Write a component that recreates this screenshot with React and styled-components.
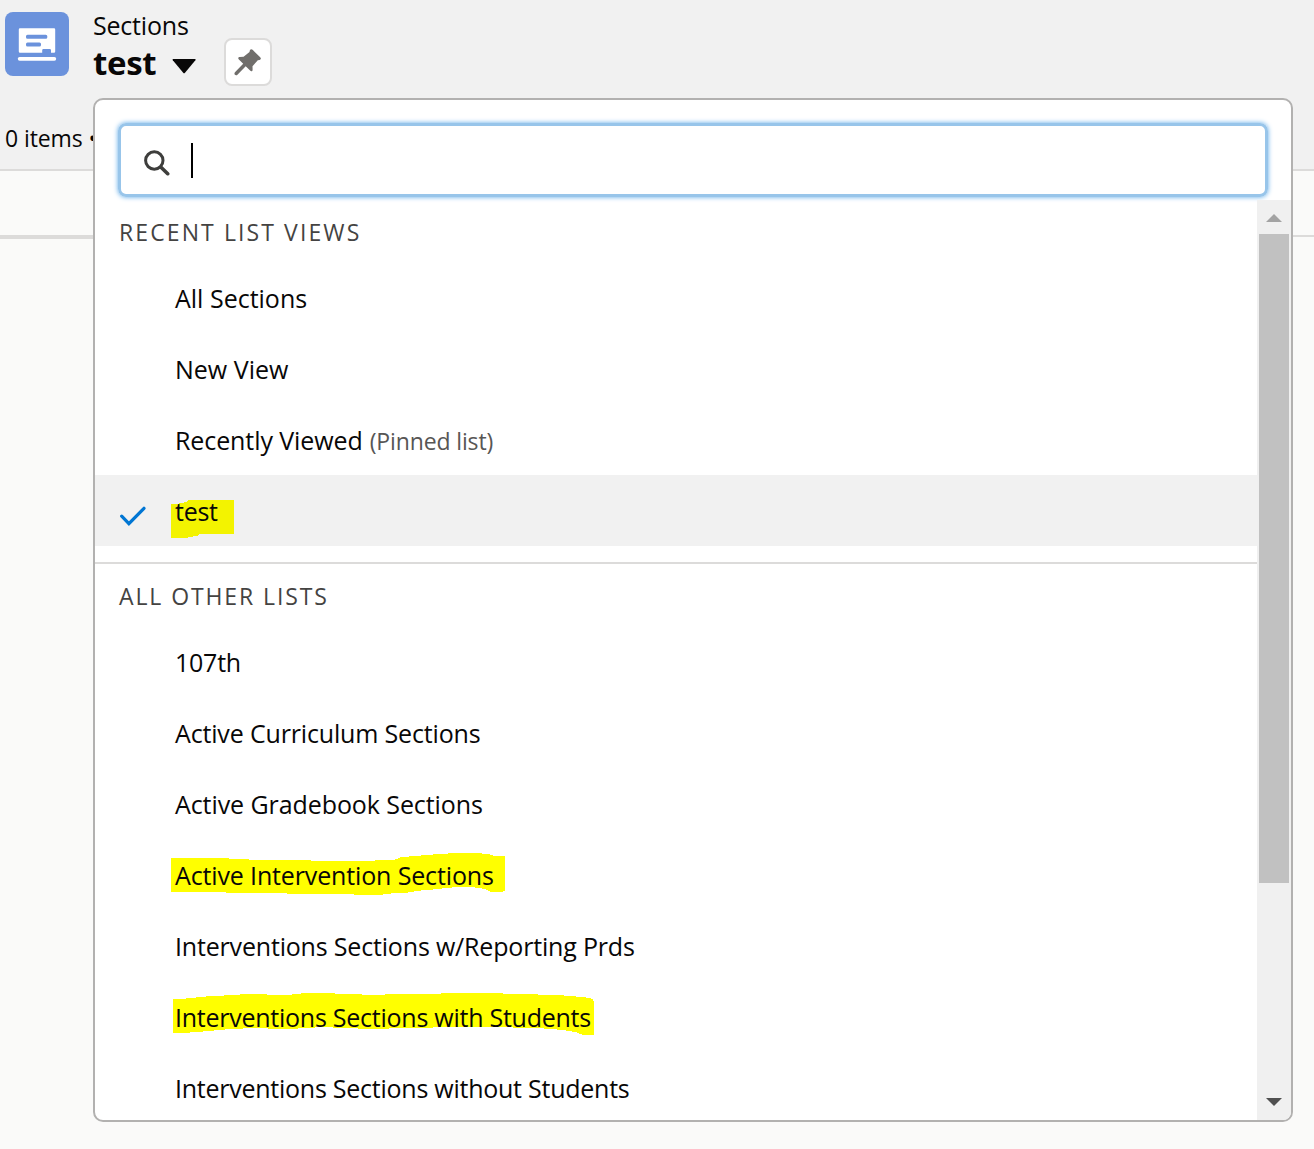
import React from "react";
import styled, { createGlobalStyle } from "styled-components";

const Global = createGlobalStyle`
  * { box-sizing: border-box; }
  body {
    margin: 0;
    background: #fafaf9;
    color: #080707;
    font-family: "Open Sans", "Noto Sans", sans-serif;
    font-weight: 380;
    overflow: hidden;
  }
`;

const Page = styled.main`
  position: relative;
  height: 1149px;
  overflow: hidden;
`;

const Header = styled.header`
  height: 171px;
  background: #f1f1f1;
  border-bottom: 2px solid #dcdbda;
`;

const TitleBar = styled.div`
  display: flex;
  align-items: flex-start;
  padding: 12px 5px 0;
`;

const EntityIcon = styled.div`
  width: 64px;
  height: 64px;
  border-radius: 8px;
  background: #6b92dc;

  svg { display: block; }
`;

const Titles = styled.div`
  margin: -2px 0 0 24px;
`;

const ObjectName = styled.div`
  font-size: 25px;
  line-height: 30px;
  letter-spacing: -0.2px;
`;

const ViewButton = styled.button`
  display: flex;
  align-items: center;
  gap: 16px;
  padding: 0;
  margin: 3px 0 0;
  border: 0;
  background: none;
  color: inherit;
  font: 700 33px/40px "Open Sans", "Noto Sans", sans-serif;
  letter-spacing: -0.3px;

  svg { margin-top: 6px; }
`;

const PinButton = styled.button`
  width: 48px;
  height: 48px;
  margin: 26px 0 0 28px;
  padding: 0;
  border: 2px solid #dcdbda;
  border-radius: 8px;
  background: #fff;

  svg { display: block; }
`;

const Summary = styled.div`
  margin: 37px 0 0 5px;
  font-size: 23px;
  line-height: 30px;
  letter-spacing: -0.1px;
  white-space: pre;
`;

const ColumnBand = styled.div`
  display: flex;
  height: 68px;
`;

const BandCell = styled.div`
  width: ${(p) => p.$width};
  height: ${(p) => (p.$thick ? 68 : 66)}px;
  flex: ${(p) => (p.$width ? "none" : 1)};
  border-bottom: ${(p) => (p.$thick ? 4 : 2)}px solid #dcdbda;
`;

const Dropdown = styled.section`
  position: absolute;
  left: 93px;
  top: 98px;
  width: 1200px;
  height: 1024px;
  display: flex;
  flex-direction: column;
  border: 2px solid #b2b1b0;
  border-radius: 10px;
  background: #fff;
  overflow: hidden;
`;

const SearchBox = styled.label`
  display: flex;
  align-items: center;
  flex: none;
  height: 74px;
  margin: 23px 23px 3px;
  padding-left: 22px;
  border: 3px solid #98c5ea;
  border-radius: 8px;
  box-shadow: 0 0 5px #5aa8e8;

  svg { margin-top: 3px; }
`;

const Caret = styled.span`
  width: 2px;
  height: 35px;
  margin: 0 0 0 20px;
  background: #000;
`;

const Body = styled.div`
  display: flex;
  flex: 1;
  min-height: 0;
`;

const Lists = styled.div`
  flex: 1;
  overflow: hidden;
`;

const Group = styled.div`
  padding-bottom: 16px;

  & + & { border-top: 2px solid #dcdbda; }
`;

const GroupTitle = styled.h3`
  height: 62px;
  margin: 0;
  padding: 1px 0 0 24px;
  color: #444342;
  font-size: 23px;
  font-weight: 380;
  line-height: 62px;
  letter-spacing: ${(p) => p.$tracking}px;
`;

const Option = styled.div`
  display: flex;
  align-items: flex-start;
  height: 71px;
  padding: 19px 0 0 24px;
  background: ${(p) => (p.$selected ? "#f1f1f1" : "transparent")};
`;

const CheckSlot = styled.span`
  width: 56px;
  height: 26px;
  margin-top: 9px;

  svg { display: block; }
`;

const Label = styled.span`
  position: relative;
  display: flex;
  align-items: baseline;
  font-size: 25px;
  line-height: 34px;
  letter-spacing: ${(p) => p.$tracking || 0}px;
  white-space: nowrap;
`;

const Words = styled.span`
  position: relative;
`;

const Note = styled.span`
  margin-left: 7px;
  color: #575655;
  font-size: 23px;
  letter-spacing: -0.13px;
`;

const Marker = styled.svg`
  position: absolute;
  left: -4px;
  top: ${(p) => p.$top}px;
  pointer-events: none;
`;

const Scrollbar = styled.div`
  display: flex;
  flex-direction: column;
  width: 34px;
  background: #f0f0f0;
`;

const ArrowButton = styled.div`
  display: flex;
  align-items: center;
  justify-content: center;
  height: 34px;
  padding: ${(p) => (p.$down ? "0 0 2px" : "2px 0 0")};
  color: ${(p) => (p.$down ? "#505050" : "#a3a3a3")};
`;

const Track = styled.div`
  flex: 1;
  padding: 0 2px;
`;

const Thumb = styled.div`
  height: 649px;
  background: #c1c1c1;
`;

const recent = [
  { text: "All Sections" },
  { text: "New View" },
  { text: "Recently Viewed", note: "(Pinned list)", tracking: -0.09 },
  {
    text: "test",
    selected: true,
    tracking: -0.25,
    mark: { top: 6, w: 63, h: 38, fill: "#f3f300", d: "M0 4H8V3H13V2H16V1H17V0H63V34H28V35H27V36H22V37H17V38H0Z" },
  },
];

const others = [
  { text: "107th", tracking: -0.25 },
  { text: "Active Curriculum Sections", tracking: -0.16 },
  { text: "Active Gradebook Sections", tracking: -0.08 },
  {
    text: "Active Intervention Sections",
    tracking: -0.14,
    mark: {
      top: -5, w: 334, h: 42, fill: "#ffff00",
      d: "M0 5H58V6H78V7H140V8H204V7H224V6H227V5H229V4H238V3H250V2H262V1H277V0H311V1H319V2H322V3H334V38H332V39H319V38H317V37H315V36H311V35H304V34H281V35H271V36H262V37H250V38H243V39H237V40H220V41H212V42H183V41H116V40H55V39H0Z",
    },
  },
  { text: "Interventions Sections w/Reporting Prds", tracking: -0.18 },
  {
    text: "Interventions Sections with Students",
    tracking: -0.25,
    mark: {
      top: -7, w: 423, h: 42, fill: "#ffff00",
      d: "M2 6H15V5H25V4H35V3H53V2H69V1H96V2H121V1H130V0H164V1H191V2H214V1H270V0H332V1H367V2H393V3H405V4H415V5H420V6H422V8H423V42H411V41H408V40H406V39H401V38H395V37H386V36H373V35H342V34H262V35H218V36H187V35H162V34H144V35H127V36H97V35H72V36H54V37H43V38H32V39H19V40H2Z",
    },
  },
  { text: "Interventions Sections without Students", tracking: -0.25 },
];

function Check() {
  return (
    <svg width="28" height="26" viewBox="0 0 28 26">
      <path d="M2.700 13.200l7.200 7.400L25 5.300" fill="none" stroke="#0176d3" strokeWidth="3.200" strokeLinecap="round" />
    </svg>
  );
}

function ListOption({ text, note, selected, tracking, mark }) {
  return (
    <Option $selected={selected}>
      <CheckSlot>{selected && <Check />}</CheckSlot>
      <Label $tracking={tracking}>
        {mark && (
          <Marker $top={mark.top} width={mark.w} height={mark.h} shapeRendering="crispEdges">
            <path d={mark.d} fill={mark.fill} />
          </Marker>
        )}
        <Words>{text}</Words>
        {note && <Note>{note}</Note>}
      </Label>
    </Option>
  );
}

export default function App() {
  return (
    <>
      <Global />
      <Page>
        <Header>
          <TitleBar>
            <EntityIcon>
              <svg width="64" height="64" viewBox="0 0 64 64" fill="#fff">
                <path
                  fillRule="evenodd"
                  d="M15 16.300h34a1.200 1.200 0 0 1 1.200 1.200v22a1.200 1.200 0 0 1-1.200 1.200h-3v-2.500a1.200 1.200 0 0 0-1.200-1.200h-6.400a1.200 1.200 0 0 0-1.200 1.200v2.500H15a1.200 1.200 0 0 1-1.200-1.200v-22a1.200 1.200 0 0 1 1.200-1.200zM22.500 22.700a1.500 1.500 0 0 0-1.500 1.500v1a1.500 1.500 0 0 0 1.500 1.500h18.300a1.500 1.500 0 0 0 1.500-1.500v-1a1.500 1.500 0 0 0-1.500-1.500zM22.500 30.500a1.500 1.500 0 0 0-1.500 1.500v1a1.500 1.500 0 0 0 1.500 1.500h12a1.500 1.500 0 0 0 1.500-1.500v-1a1.500 1.500 0 0 0-1.500-1.500z"
                />
                <rect x="12.800" y="45" width="38.400" height="3.700" rx="1.850" />
              </svg>
            </EntityIcon>
            <Titles>
              <ObjectName>Sections</ObjectName>
              <ViewButton>
                test
                <svg width="24" height="16" viewBox="0 0 24 16">
                  <path d="M1.300 1h21.600c.7 0 .9.700.5 1.200L13 14.700a1.200 1.200 0 0 1-1.800 0L.8 2.200C.4 1.700.6 1 1.300 1z" fill="#080707" />
                </svg>
              </ViewButton>
            </Titles>
            <PinButton aria-label="Pin this list view">
              <svg width="44" height="44" viewBox="1.500 1 44 44" fill="#706e6b">
                <path d="M25.300 11.500c.6-1.500 1.800-1.700 2.800-.7l7.600 7.500c1.100 1.100.8 2.300-.7 2.700l-1.700.2-5.300 6 .1 3.500c-.1 1.700-1.400 2-2.500.9l-4.400-4.300-8 8.100c-.8.8-1.800 1.300-2.800.4-.8-.9-.5-1.900.3-2.800l8-8.200-4.300-4.300c-1.200-1.200-.8-2.500.8-2.600l3.900-.1 5.900-4.900z" />
              </svg>
            </PinButton>
          </TitleBar>
          <Summary>0 items •</Summary>
        </Header>
        <ColumnBand>
          <BandCell $width="100px" $thick />
          <BandCell />
        </ColumnBand>

        <Dropdown>
          <SearchBox>
            <svg width="28" height="28" viewBox="0 0 28 28" fill="none" stroke="#3e3e3c" strokeLinecap="round">
              <circle cx="11.300" cy="12.500" r="8.700" strokeWidth="3" />
              <path d="M18 19.200l6.700 6.500" strokeWidth="3.600" />
            </svg>
            <Caret />
          </SearchBox>
          <Body>
            <Lists>
              <Group>
                <GroupTitle $tracking={2.1}>RECENT LIST VIEWS</GroupTitle>
                {recent.map((item) => (
                  <ListOption key={item.text} {...item} />
                ))}
              </Group>
              <Group>
                <GroupTitle $tracking={1.9}>ALL OTHER LISTS</GroupTitle>
                {others.map((item) => (
                  <ListOption key={item.text} {...item} />
                ))}
              </Group>
            </Lists>
            <Scrollbar>
              <ArrowButton>
                <svg width="16" height="8"><path d="M0 8L8 0l8 8z" fill="currentColor" /></svg>
              </ArrowButton>
              <Track><Thumb /></Track>
              <ArrowButton $down>
                <svg width="16" height="8"><path d="M0 0h16L8 8z" fill="currentColor" /></svg>
              </ArrowButton>
            </Scrollbar>
          </Body>
        </Dropdown>
      </Page>
    </>
  );
}
